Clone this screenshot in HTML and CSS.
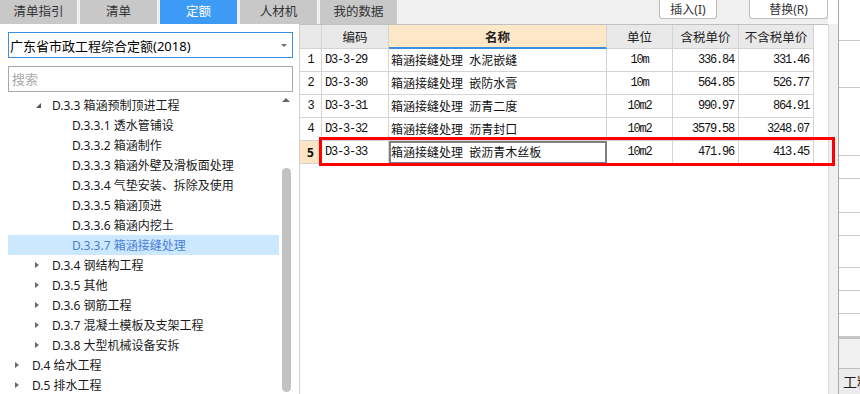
FILE: index.html
```html
<!DOCTYPE html>
<html lang="zh-CN">
<head>
  <meta charset="UTF-8">
  <title>定额</title>
  <link rel="stylesheet" href="styles.css">
</head>
<body>
  <div class="app">
    <div class="main">
      <div class="topbar">
        <div class="tabs">
          <div class="tab">清单指引</div>
          <div class="tab">清单</div>
          <div class="tab active">定额</div>
          <div class="tab">人材机</div>
          <div class="tab">我的数据</div>
        </div>
        <div class="actions">
          <button class="btn btn-insert">插入(I)</button>
          <button class="btn btn-replace">替换(R)</button>
        </div>
      </div>

      <div class="content">
        <!-- left: quota library tree -->
        <div class="left">
          <div class="select">
            <span>广东省市政工程综合定额(2018)</span>
            <span class="caret"></span>
          </div>
          <div class="search">搜索</div>
          <div class="tree-wrap">
            <div class="tree">
              <div class="node lv1"><span class="toggle"><i class="open"></i></span>D.3.3 箱涵预制顶进工程</div>
              <div class="node lv2"><span class="toggle"></span>D.3.3.1 透水管铺设</div>
              <div class="node lv2"><span class="toggle"></span>D.3.3.2 箱涵制作</div>
              <div class="node lv2"><span class="toggle"></span>D.3.3.3 箱涵外壁及滑板面处理</div>
              <div class="node lv2"><span class="toggle"></span>D.3.3.4 气垫安装、拆除及使用</div>
              <div class="node lv2"><span class="toggle"></span>D.3.3.5 箱涵顶进</div>
              <div class="node lv2"><span class="toggle"></span>D.3.3.6 箱涵内挖土</div>
              <div class="node lv2 selected"><span class="toggle"></span>D.3.3.7 箱涵接缝处理</div>
              <div class="node lv1"><span class="toggle"><i class="closed"></i></span>D.3.4 钢结构工程</div>
              <div class="node lv1"><span class="toggle"><i class="closed"></i></span>D.3.5 其他</div>
              <div class="node lv1"><span class="toggle"><i class="closed"></i></span>D.3.6 钢筋工程</div>
              <div class="node lv1"><span class="toggle"><i class="closed"></i></span>D.3.7 混凝土模板及支架工程</div>
              <div class="node lv1"><span class="toggle"><i class="closed"></i></span>D.3.8 大型机械设备安拆</div>
              <div class="node lv0"><span class="toggle"><i class="closed"></i></span>D.4 给水工程</div>
              <div class="node lv0"><span class="toggle"><i class="closed"></i></span>D.5 排水工程</div>
            </div>
            <div class="vscroll">
              <span class="up"></span>
              <span class="thumb"></span>
            </div>
          </div>
        </div>

        <!-- right: quota items grid -->
        <div class="grid">
          <div class="row head">
            <div class="cell"></div>
            <div class="cell">编码</div>
            <div class="cell sorted">名称</div>
            <div class="cell">单位</div>
            <div class="cell">含税单价</div>
            <div class="cell">不含税单价</div>
          </div>
          <div class="row">
            <div class="cell num">1</div>
            <div class="cell code">D3-3-29</div>
            <div class="cell name">箱涵接缝处理  水泥嵌缝</div>
            <div class="cell unit">10m</div>
            <div class="cell price">336.84</div>
            <div class="cell price">331.46</div>
          </div>
          <div class="row">
            <div class="cell num">2</div>
            <div class="cell code">D3-3-30</div>
            <div class="cell name">箱涵接缝处理  嵌防水膏</div>
            <div class="cell unit">10m</div>
            <div class="cell price">564.85</div>
            <div class="cell price">526.77</div>
          </div>
          <div class="row">
            <div class="cell num">3</div>
            <div class="cell code">D3-3-31</div>
            <div class="cell name">箱涵接缝处理  沥青二度</div>
            <div class="cell unit">10m2</div>
            <div class="cell price">990.97</div>
            <div class="cell price">864.91</div>
          </div>
          <div class="row">
            <div class="cell num">4</div>
            <div class="cell code">D3-3-32</div>
            <div class="cell name">箱涵接缝处理  沥青封口</div>
            <div class="cell unit">10m2</div>
            <div class="cell price">3579.58</div>
            <div class="cell price">3248.07</div>
          </div>
          <div class="row current">
            <div class="cell num">5</div>
            <div class="cell code">D3-3-33</div>
            <div class="cell name editing">箱涵接缝处理  嵌沥青木丝板</div>
            <div class="cell unit">10m2</div>
            <div class="cell price">471.96</div>
            <div class="cell price">413.45</div>
          </div>
          <div class="mark"></div>
        </div>
      </div>
    </div>

    <div class="splitter"><div class="splitter-top"></div></div>

    <div class="side">
      <div class="side-rows">
        <div class="srow" style="height: 41px"></div>
        <div class="srow" style="height: 47px"></div>
        <div class="srow" style="height: 68px"></div>
        <div class="srow" style="height: 23px"></div>
        <div class="srow" style="height: 34px"></div>
        <div class="srow" style="height: 23px"></div>
        <div class="srow" style="height: 32px"></div>
        <div class="srow" style="height: 23px"></div>
        <div class="srow" style="height: 23px"></div>
        <div class="srow" style="height: 23px"></div>
      </div>
      <div class="side-fill"></div>
      <div class="side-head">工料机</div>
    </div>
  </div>
</body>
</html>
```

FILE: styles.css
```css
* {
  box-sizing: border-box;
}
body {
  margin: 0;
  width: 860px;
  height: 394px;
  overflow: hidden;
  font-family: "Noto Sans", "Noto Sans CJK SC", sans-serif;
  font-size: 12px;
  color: #1e1e1e;
  background: #fff;
}
.app {
  display: flex;
  height: 394px;
}
.main {
  width: 828px;
  display: flex;
  flex-direction: column;
}

/* top bar */
.topbar {
  height: 24px;
  display: flex;
  justify-content: space-between;
  background: #f0f0f0;
}
.tabs {
  display: flex;
  gap: 3px;
}
.tab {
  width: 77px;
  height: 24px;
  line-height: 24px;
  text-align: center;
  background: #c8c8c8;
  color: #333;
  font-size: 12.5px;
}
.tab.active {
  background: #3e9bf5;
  color: #fff;
}
.actions {
  display: flex;
  gap: 32px;
}
.btn {
  height: 19px;
  padding: 0;
  margin: 0;
  background: #fff;
  border: 1px solid #bdbdbd;
  border-top: none;
  border-radius: 0 0 3px 3px;
  font-family: "Noto Sans", "Noto Sans CJK SC", sans-serif;
  font-size: 12px;
  line-height: 17px;
  color: #333;
}
.btn-insert { width: 58px; }
.btn-replace { width: 79px; }

.content {
  flex: 1;
  display: flex;
  min-height: 0;
}

/* left panel */
.left {
  width: 300px;
  border-right: 1px solid #d0d0d0;
  padding: 8px 0 0 8px;
  display: flex;
  flex-direction: column;
}
.select {
  width: 285px;
  height: 26px;
  border: 1px solid #3c8fe0;
  padding: 0 0 0 1px;
  display: flex;
  align-items: center;
  justify-content: space-between;
  font-size: 13px;
  color: #000;
}
.caret {
  width: 0;
  height: 0;
  margin-right: 5px;
  border-left: 3px solid transparent;
  border-right: 3px solid transparent;
  border-top: 3px solid #707070;
}
.search {
  width: 285px;
  height: 26px;
  margin-top: 8px;
  border: 1px solid #a8a8a8;
  padding-left: 3px;
  line-height: 24px;
  font-size: 13px;
  color: #a8a8a8;
}
.tree-wrap {
  flex: 1;
  display: flex;
  gap: 2px;
  margin-top: 3px;
  min-height: 0;
}
.tree {
  width: 271px;
}
.node {
  height: 20px;
  display: flex;
  align-items: center;
  white-space: nowrap;
  color: #1a1a1a;
}
.node.lv0 { padding-left: 4px; }
.node.lv1 { padding-left: 24px; }
.node.lv2 { padding-left: 44px; }
.node.selected {
  background: #cce8ff;
  color: #4a7fd6;
}
.toggle {
  width: 20px;
  height: 20px;
  display: flex;
  align-items: center;
  padding-left: 3px;
}
.toggle .closed {
  width: 0;
  height: 0;
  border-top: 3.5px solid transparent;
  border-bottom: 3.5px solid transparent;
  border-left: 4px solid #6a6a6a;
}
.toggle .open {
  width: 0;
  height: 0;
  margin-left: 1px;
  border-left: 5px solid transparent;
  border-bottom: 5px solid #555;
}
.vscroll {
  width: 10px;
  display: flex;
  flex-direction: column;
  align-items: center;
}
.vscroll .up {
  margin-top: 3px;
  width: 0;
  height: 0;
  border-left: 4px solid transparent;
  border-right: 4px solid transparent;
  border-bottom: 4px solid #666;
}
.vscroll .thumb {
  width: 9px;
  flex: 1;
  margin: 66px 0 2px;
  background: #c2c2c2;
  border-radius: 5px;
}

/* grid */
.grid {
  position: relative;
  flex: 1;
  border-top: 1px solid #c0c0c0;
  background: #fff;
}
.row {
  display: grid;
  grid-template-columns: 22px 67px 218px 66px 66px 75px;
  height: 23px;
}
.row.head {
  height: 24px;
}
.cell {
  border-right: 1px solid #d4d4d4;
  border-bottom: 1px solid #d4d4d4;
  display: flex;
  align-items: center;
  white-space: pre;
  overflow: hidden;
}
.head .cell {
  background: #e9e9e9;
  justify-content: center;
  font-size: 12.5px;
  color: #222;
}
.head .cell.sorted {
  background: #fde7c9;
  font-weight: bold;
  border-bottom: 2px solid #3c8fe0;
}
.num,
.code,
.unit,
.price {
  font-family: "Liberation Mono", monospace;
  font-size: 12px;
  letter-spacing: -1.2px;
  color: #111;
}
.num {
  justify-content: center;
}
.code {
  padding-left: 3px;
}
.name {
  padding-left: 2px;
  color: #111;
}
.unit {
  justify-content: center;
}
.price {
  justify-content: flex-end;
  padding-right: 4px;
}
.current .num {
  background: #fde5c4;
  font-weight: bold;
  font-family: "Noto Sans", sans-serif;
  letter-spacing: 0;
}
.editing {
  outline: 2px solid #808080;
  outline-offset: -2px;
}
.mark {
  position: absolute;
  left: 19px;
  top: 112px;
  width: 516px;
  height: 29px;
  border: 3px solid #f00;
}

/* splitter and right side panel */
.splitter {
  width: 11px;
  display: flex;
  flex-direction: column;
  background: #f0f0f0;
  border-left: 1px solid #d8d8d8;
  border-right: 1px solid #a8a8a8;
}
.splitter-top {
  height: 24px;
  margin-left: -1px;
  background: #fff;
}
.side {
  flex: 1;
  display: flex;
  flex-direction: column;
  background: #fff;
  overflow: hidden;
}
.srow {
  border-bottom: 1px solid #c8c8c8;
}
.side-fill {
  height: 32px;
  border-top: 2px solid #c4c4c4;
  border-bottom: 1px solid #c0c0c0;
  background: #f0f0f0;
}
.side-head {
  flex: 1;
  background: #ececec;
  padding: 2px 0 0 4px;
  font-size: 14px;
  white-space: nowrap;
}
```
